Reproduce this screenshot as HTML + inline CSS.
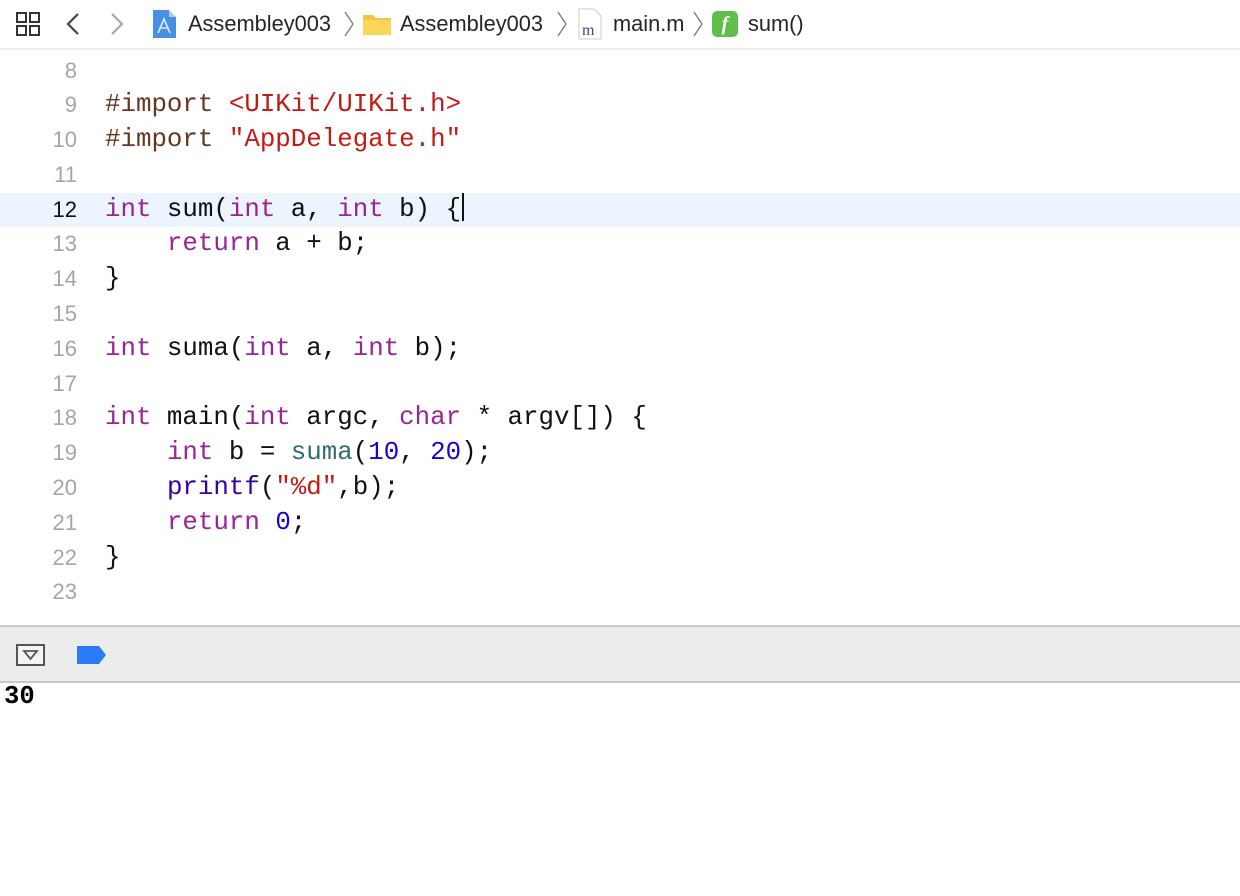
<!DOCTYPE html>
<html><head><meta charset="utf-8"><style>
*{margin:0;padding:0;box-sizing:border-box}
body{width:1240px;height:896px;background:#fff;position:relative;overflow:hidden;font-family:"Liberation Sans",sans-serif}
.bar{position:absolute;left:0;top:0;width:1240px;height:50px;border-bottom:2px solid #ececec}
.bc{position:absolute;top:10px;font-size:21.8px;color:#262626;line-height:28px}
.code{position:absolute;left:0;top:53.5px;width:1240px;font-family:"Liberation Mono",monospace;font-size:25.8px;line-height:34.8px}
.l{height:34.8px;position:relative;white-space:pre}
.n{position:absolute;right:1163px;color:#a6a6a6;font-family:"Liberation Sans",sans-serif;font-size:22px}
.t{position:absolute;left:105px;color:#111}
.hl{background:#ecf4fe}.hl .n{color:#111}
.k{color:#9b2393}.p{color:#643820}.s{color:#c41a16}.m{color:#1c00cf}.f{color:#326d74}.lib{color:#3900a0}
.cur{display:inline-block;width:2px;height:28px;background:#111;vertical-align:-5px;margin-left:1px}
.dbg{position:absolute;left:0;top:625px;width:1240px;height:58px;background:#ececec;border-top:2px solid #c8c8c8;border-bottom:2px solid #c8c8c8}
.out{position:absolute;left:4px;top:682px;font-family:"Liberation Mono",monospace;font-weight:bold;font-size:25.6px;color:#000}
</style></head><body>
<div class="bar">
<svg style="position:absolute;left:15px;top:11px" width="27" height="27" viewBox="0 0 27 27" fill="none" stroke="#333" stroke-width="2"><rect x="2" y="2" width="9" height="9"/><rect x="15" y="2" width="9" height="9"/><rect x="2" y="15" width="9" height="9"/><rect x="15" y="15" width="9" height="9"/></svg>
<svg style="position:absolute;left:64px;top:12px" width="18" height="24" viewBox="0 0 18 24" fill="none" stroke="#444" stroke-width="2.2"><path d="M14 2 L4 12 L14 22"/></svg>
<svg style="position:absolute;left:108px;top:12px" width="18" height="24" viewBox="0 0 18 24" fill="none" stroke="#aaa" stroke-width="2.2"><path d="M4 2 L14 12 L4 22"/></svg>
<svg style="position:absolute;left:152px;top:9px" width="25" height="30" viewBox="0 0 25 30"><path d="M1 1h16l7 7v21H1z" fill="#4a90e2"/><path d="M17 1v7h7" fill="#a9cdf5"/><path d="M6 24l6-14 6 14M8 19h8" stroke="#dbeafc" stroke-width="1.6" fill="none"/></svg>
<div class="bc" style="left:188px">Assembley003</div>
<svg style="position:absolute;left:343px;top:10px" width="12" height="28" viewBox="0 0 12 28" fill="none" stroke="#777" stroke-width="1.3"><path d="M2 2 L10 14 L2 26"/></svg>
<svg style="position:absolute;left:362px;top:12px" width="30" height="24" viewBox="0 0 30 24"><path d="M1 3h10l3 3h15v17H1z" fill="#f4c542"/><path d="M1 8h28v15H1z" fill="#fbd65a"/></svg>
<div class="bc" style="left:400px">Assembley003</div>
<svg style="position:absolute;left:556px;top:10px" width="12" height="28" viewBox="0 0 12 28" fill="none" stroke="#777" stroke-width="1.3"><path d="M2 2 L10 14 L2 26"/></svg>
<svg style="position:absolute;left:577px;top:8px" width="26" height="32" viewBox="0 0 26 32"><path d="M2 1h15l7 7v23H2z" fill="#fff" stroke="#ccc"/><text x="5" y="27" font-family="Liberation Serif" font-size="16" fill="#4b3b9a">m</text></svg>
<div class="bc" style="left:613px">main.m</div>
<svg style="position:absolute;left:692px;top:10px" width="12" height="28" viewBox="0 0 12 28" fill="none" stroke="#777" stroke-width="1.3"><path d="M2 2 L10 14 L2 26"/></svg>
<div style="position:absolute;left:712px;top:11px;width:26px;height:26px;background:#5fbf4a;border-radius:5px;color:#fff;font-family:'Liberation Serif',serif;font-style:italic;font-weight:bold;font-size:20px;text-align:center;line-height:26px">f</div>
<div class="bc" style="left:748px">sum()</div>
</div>
<div class="code">
<div class="l"><span class="n">8</span></div>
<div class="l"><span class="n">9</span><span class="t"><span class="p">#import</span> <span class="s">&lt;UIKit/UIKit.h&gt;</span></span></div>
<div class="l"><span class="n">10</span><span class="t"><span class="p">#import</span> <span class="s">"AppDelegate.h"</span></span></div>
<div class="l"><span class="n">11</span></div>
<div class="l hl"><span class="n">12</span><span class="t"><span class="k">int</span> sum(<span class="k">int</span> a, <span class="k">int</span> b) {<span class="cur"></span></span></div>
<div class="l"><span class="n">13</span><span class="t">    <span class="k">return</span> a + b;</span></div>
<div class="l"><span class="n">14</span><span class="t">}</span></div>
<div class="l"><span class="n">15</span></div>
<div class="l"><span class="n">16</span><span class="t"><span class="k">int</span> suma(<span class="k">int</span> a, <span class="k">int</span> b);</span></div>
<div class="l"><span class="n">17</span></div>
<div class="l"><span class="n">18</span><span class="t"><span class="k">int</span> main(<span class="k">int</span> argc, <span class="k">char</span> * argv[]) {</span></div>
<div class="l"><span class="n">19</span><span class="t">    <span class="k">int</span> b = <span class="f">suma</span>(<span class="m">10</span>, <span class="m">20</span>);</span></div>
<div class="l"><span class="n">20</span><span class="t">    <span class="lib">printf</span>(<span class="s">"%d"</span>,b);</span></div>
<div class="l"><span class="n">21</span><span class="t">    <span class="k">return</span> <span class="m">0</span>;</span></div>
<div class="l"><span class="n">22</span><span class="t">}</span></div>
<div class="l"><span class="n">23</span></div>
</div>
<div class="dbg">
<div style="position:absolute;left:16px;top:17px;width:29px;height:22px;border:2px solid #555;background:#f4f4f4"></div>
<svg style="position:absolute;left:22px;top:22px" width="17" height="12" viewBox="0 0 17 12" fill="none" stroke="#555" stroke-width="1.8"><path d="M2 2h13L8.5 10z"/></svg>
<svg style="position:absolute;left:77px;top:19px" width="30" height="18" viewBox="0 0 30 18"><path d="M0 0h22l7 9-7 9H0z" fill="#2a7bf5"/></svg>
</div>
<div class="out">30</div>
</body></html>
